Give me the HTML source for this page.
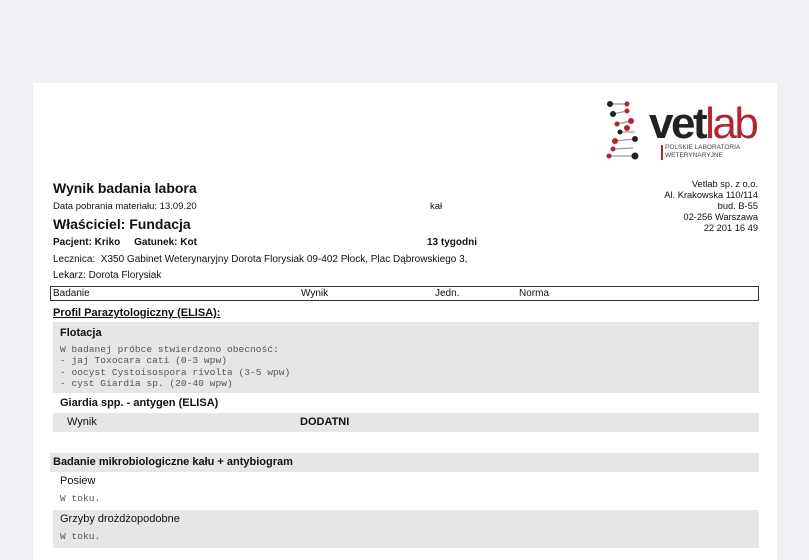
<!DOCTYPE html>
<html><head><meta charset="utf-8"><style>
body{margin:0;width:809px;height:560px;background:#eef0f3;position:relative;overflow:hidden;font-family:"Liberation Sans",Arial,sans-serif;color:#111}
.pg{position:absolute;left:33px;top:83px;width:744px;height:477px;background:#fff}
.a{position:absolute;white-space:nowrap}
.b{font-weight:bold}
.m{font-family:"Liberation Mono",monospace;color:#555;font-size:9.6px}
.g{position:absolute;background:#e6e6e6}
</style></head><body>
<div class="pg"></div>
<svg class="a" style="left:605px;top:99px" width="40" height="62" viewBox="0 0 40 62">
<g stroke="#999" stroke-width="1.2">
<line x1="5" y1="5" x2="22" y2="5"/><line x1="8" y1="15" x2="22" y2="12"/><line x1="12" y1="25" x2="26" y2="22"/><line x1="15" y1="33" x2="30" y2="33"/><line x1="10" y1="42" x2="30" y2="40"/><line x1="8" y1="50" x2="28" y2="49"/><line x1="4" y1="57" x2="30" y2="57"/></g>
<g fill="#222"><circle cx="5" cy="5" r="3"/><circle cx="8" cy="15" r="3"/><circle cx="30" cy="40" r="3"/><circle cx="30" cy="57" r="3.5"/><circle cx="15" cy="33" r="2.5"/></g>
<g fill="#b32530"><circle cx="22" cy="5" r="2.5"/><circle cx="22" cy="12" r="2.5"/><circle cx="26" cy="22" r="3"/><circle cx="12" cy="25" r="2.5"/><circle cx="10" cy="42" r="3"/><circle cx="8" cy="50" r="2.5"/><circle cx="4" cy="57" r="2.5"/><circle cx="22" cy="29" r="3"/></g>
</svg>
<div class="a b" style="left:649px;top:102px;font-size:44px;letter-spacing:-2.5px;line-height:44px;color:#222">vet<span style="color:#b32530;font-weight:normal">lab</span></div>
<div class="a" style="left:661px;top:145px;width:2px;height:15px;background:#b32530"></div>
<div class="a" style="left:665px;top:144px;font-size:6.5px;line-height:8px;color:#444">POLSKIE LABORATORIA<br>WETERYNARYJNE</div>
<div class="a" style="right:51px;top:179px;font-size:9.3px;line-height:11px;text-align:right">Vetlab sp. z o.o.<br>Al. Krakowska 110/114<br>bud. B-55<br>02-256 Warszawa<br>22 201 16 49</div>
<div class="a b" style="left:53px;top:180px;font-size:14px">Wynik badania labora</div>
<div class="a" style="left:53px;top:201px;font-size:9.5px">Data pobrania materiału: 13.09.20</div>
<div class="a" style="left:430px;top:201px;font-size:9.5px">kał</div>
<div class="a b" style="left:53px;top:216px;font-size:14px">Właściciel: Fundacja</div>
<div class="a b" style="left:53px;top:237px;font-size:10px">Pacjent: Kriko &nbsp;&nbsp;&nbsp;&nbsp;Gatunek: Kot</div>
<div class="a b" style="left:427px;top:237px;font-size:10px">13 tygodni</div>
<div class="a" style="left:53px;top:254px;font-size:10px">Lecznica: &nbsp;X350 Gabinet Weterynaryjny Dorota Florysiak 09-402 Płock, Plac Dąbrowskiego 3,</div>
<div class="a" style="left:53px;top:270px;font-size:10px">Lekarz: Dorota Florysiak</div>
<div class="a" style="left:50px;top:286px;width:707px;height:13px;border:1px solid #333;font-size:10px;line-height:13px">
<span class="a" style="left:2px">Badanie</span><span class="a" style="left:250px">Wynik</span><span class="a" style="left:384px">Jedn.</span><span class="a" style="left:468px">Norma</span></div>
<div class="a b" style="left:53px;top:307px;font-size:11px;text-decoration:underline">Profil Parazytologiczny (ELISA):</div>
<div class="g" style="left:53px;top:322px;width:706px;height:71px"></div>
<div class="a b" style="left:60px;top:327px;font-size:11px">Flotacja</div>
<div class="a m" style="left:60px;top:344px;line-height:11.3px">W badanej próbce stwierdzono obecność:<br>- jaj Toxocara cati (0-3 wpw)<br>- oocyst Cystoisospora rivolta (3-5 wpw)<br>- cyst Giardia sp. (20-40 wpw)</div>
<div class="a b" style="left:60px;top:397px;font-size:11px">Giardia spp. - antygen (ELISA)</div>
<div class="g" style="left:53px;top:413px;width:706px;height:19px"></div>
<div class="a" style="left:67px;top:416px;font-size:11px">Wynik</div>
<div class="a b" style="left:300px;top:416px;font-size:11px">DODATNI</div>
<div class="g" style="left:50px;top:453px;width:709px;height:19px"></div>
<div class="a b" style="left:53px;top:456px;font-size:11px">Badanie mikrobiologiczne kału + antybiogram</div>
<div class="a" style="left:60px;top:475px;font-size:11px">Posiew</div>
<div class="a m" style="left:60px;top:493px">W toku.</div>
<div class="g" style="left:53px;top:510px;width:706px;height:38px"></div>
<div class="a" style="left:60px;top:513px;font-size:11px">Grzyby drożdżopodobne</div>
<div class="a m" style="left:60px;top:531px">W toku.</div>
</body></html>
